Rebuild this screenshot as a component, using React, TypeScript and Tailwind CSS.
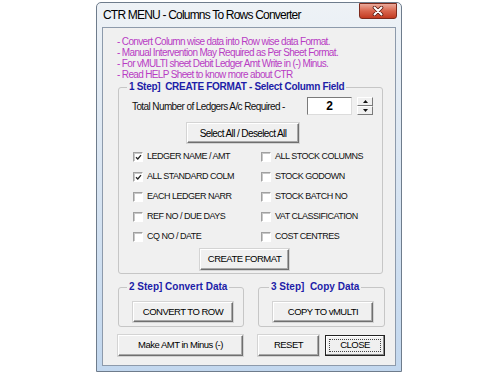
import React from 'react';

const font = "font-['Liberation_Sans',Arial,sans-serif]";

const Btn: React.FC<{ label: string; className?: string }> = ({ label, className = '' }) => (
  <button
    className={`flex items-center justify-center bg-[#f0f0f0] text-[9.5px] tracking-[-0.5px] text-black border border-t-white border-l-white border-r-[#6f6f6f] border-b-[#6f6f6f] shadow-[inset_-1px_-1px_0_#a8a8a8,0_0_0_1px_#d4d4d4] ${className}`}
  >
    {label}
  </button>
);

const Check: React.FC<{ label: string; checked?: boolean }> = ({ label, checked }) => (
  <div className="h-[20px] flex items-center">
    <span className="w-[10px] h-[10px] ml-[1px] flex items-center justify-center bg-white border-t border-l border-t-[#a0a0a0] border-l-[#a0a0a0] border-r border-b border-r-white border-b-white shadow-[inset_1px_1px_0_#c8c8c8]">
      {checked && (
        <svg width="7" height="7" viewBox="0 0 7 7">
          <path d="M1 3.2 L2.8 5 L6 1.2" fill="none" stroke="#222" strokeWidth="1.3" />
        </svg>
      )}
    </span>
    <span className="ml-[4px] text-[9px] tracking-[-0.5px] text-[#111]">{label}</span>
  </div>
);

const Legend: React.FC<{ text: string; className?: string }> = ({ text, className = '' }) => (
  <legend className={`px-[2px] whitespace-pre text-[10px] leading-[12px] font-bold text-[#1d1da8] ${className}`}>{text}</legend>
);

export default function App() {
  return (
    <div className={`w-[500px] h-[375px] bg-white pl-[96px] pt-[2px] ${font}`}>
      {/* window frame */}
      <div className="w-[306px] h-[370px] border border-[#6e7c8c] rounded-t-[5px] bg-gradient-to-b from-[#eef2f6] to-[#c2d7ee] flex flex-col">
        {/* title bar */}
        <div className="h-[24px] flex items-start justify-between">
          <span className="mt-[5px] ml-[6px] text-[12px] leading-[14px] tracking-[-0.8px] text-black">
            CTR MENU - Columns To Rows Converter
          </span>
          <div className="mr-[4px] w-[38px] h-[16px] rounded-b-[3px] border border-[#7d2a1c] bg-gradient-to-b from-[#eaa99b] via-[#d8644c] to-[#c2391f] flex items-center justify-center">
            <svg width="12" height="10" viewBox="0 0 12 10">
              <path d="M2.5 1.5 L9.5 8.5 M9.5 1.5 L2.5 8.5" stroke="#5a1a10" strokeWidth="3.6" strokeLinecap="round" />
              <path d="M2.5 1.5 L9.5 8.5 M9.5 1.5 L2.5 8.5" stroke="#fff" strokeWidth="2" strokeLinecap="round" />
            </svg>
          </div>
        </div>

        {/* client area */}
        <div className="mx-[5px] h-[339px] border border-[#8d9aab] bg-[#f0f0f0] flex flex-col">
          <div className="pt-[8px] pl-[14px] text-[10px] leading-[11px] tracking-[-0.65px] text-[#b83cc4]">
            <p>- Convert Column wise data into Row wise data Format.</p>
            <p>- Manual Intervention May Required as Per Sheet Format.</p>
            <p>- For vMULTI sheet Debit Ledger Amt Write in (-) Minus.</p>
            <p>- Read HELP Sheet to know more about CTR</p>
          </div>

          {/* step 1 */}
          <fieldset className="mt-[1px] ml-[15px] w-[265px] border border-[#c6c6c6] rounded-[3px] pb-[3px]">
            <Legend text="1 Step]  CREATE FORMAT - Select Column Field" className="ml-[8px] tracking-[-0.3px]" />
            <div className="pl-[13px]">
              <div className="mt-[4px] h-[18px] flex items-center">
                <span className="w-[175px] text-[10px] tracking-[-0.6px] text-[#111]">Total Number of Ledgers A/c Required -</span>
                <div className="w-[45px] h-[18px] bg-white border border-t-[#7a7a7a] border-l-[#7a7a7a] border-r-[#dcdcdc] border-b-[#dcdcdc] flex items-center justify-center text-[12px] font-bold">
                  2
                </div>
                <div className="ml-[5px] w-[16px] h-[18px] flex flex-col">
                  <div className="h-[9px] flex items-center justify-center bg-[#f0f0f0] border border-t-white border-l-white border-r-[#7a7a7a] border-b-[#7a7a7a]">
                    <svg width="5" height="3" viewBox="0 0 5 3"><path d="M2.5 0 L5 3 L0 3 Z" fill="#111" /></svg>
                  </div>
                  <div className="h-[9px] flex items-center justify-center bg-[#f0f0f0] border border-t-white border-l-white border-r-[#7a7a7a] border-b-[#7a7a7a]">
                    <svg width="5" height="3" viewBox="0 0 5 3"><path d="M0 0 L5 0 L2.5 3 Z" fill="#111" /></svg>
                  </div>
                </div>
              </div>

              <Btn label="Select All / Deselect All" className="mt-[8px] ml-[55px] w-[112px] h-[20px] text-[10px] tracking-[-0.6px]" />

              <div className="mt-[4px] grid grid-cols-[128px_1fr]">
                <Check label="LEDGER NAME / AMT" checked />
                <Check label="ALL STOCK COLUMNS" />
                <Check label="ALL STANDARD COLM" checked />
                <Check label="STOCK GODOWN" />
                <Check label="EACH LEDGER NARR" />
                <Check label="STOCK BATCH NO" />
                <Check label="REF NO / DUE DAYS" />
                <Check label="VAT CLASSIFICATION" />
                <Check label="CQ NO / DATE" />
                <Check label="COST CENTRES" />
              </div>

              <Btn label="CREATE FORMAT" className="mt-[2px] ml-[68px] w-[89px] h-[21px]" />
            </div>
          </fieldset>

          {/* step 2 and 3 */}
          <div className="mt-[7px] ml-[15px] flex gap-[14px]">
            <fieldset className="w-[126px] border border-[#c6c6c6] rounded-[3px] pb-[4px]">
              <Legend text="2 Step] Convert Data" className="ml-[8px] tracking-[0px]" />
              <Btn label="CONVERT TO ROW" className="mt-[9px] ml-[14px] w-[100px] h-[20px]" />
            </fieldset>
            <fieldset className="w-[127px] border border-[#c6c6c6] rounded-[3px] pb-[4px]">
              <Legend text="3 Step]  Copy Data" className="ml-[10px] tracking-[0px]" />
              <Btn label="COPY TO vMULTI" className="mt-[9px] ml-[14px] w-[100px] h-[20px]" />
            </fieldset>
          </div>

          {/* bottom buttons */}
          <div className="mt-[8px] flex">
            <Btn label="Make AMT in Minus (-)" className="ml-[15px] w-[125px] h-[21px]" />
            <Btn label="RESET" className="ml-[15px] w-[61px] h-[21px]" />
            <button className="ml-[6px] w-[60px] h-[21px] p-[3px] bg-[#f0f0f0] border border-[#222] shadow-[inset_-1px_-1px_0_#8a8a8a,inset_1px_1px_0_#fff] flex">
              <span className="flex-1 border border-dotted border-[#444] flex items-center justify-center text-[9.5px] tracking-[-0.5px] text-black">
                CLOSE
              </span>
            </button>
          </div>
        </div>
      </div>
    </div>
  );
}
